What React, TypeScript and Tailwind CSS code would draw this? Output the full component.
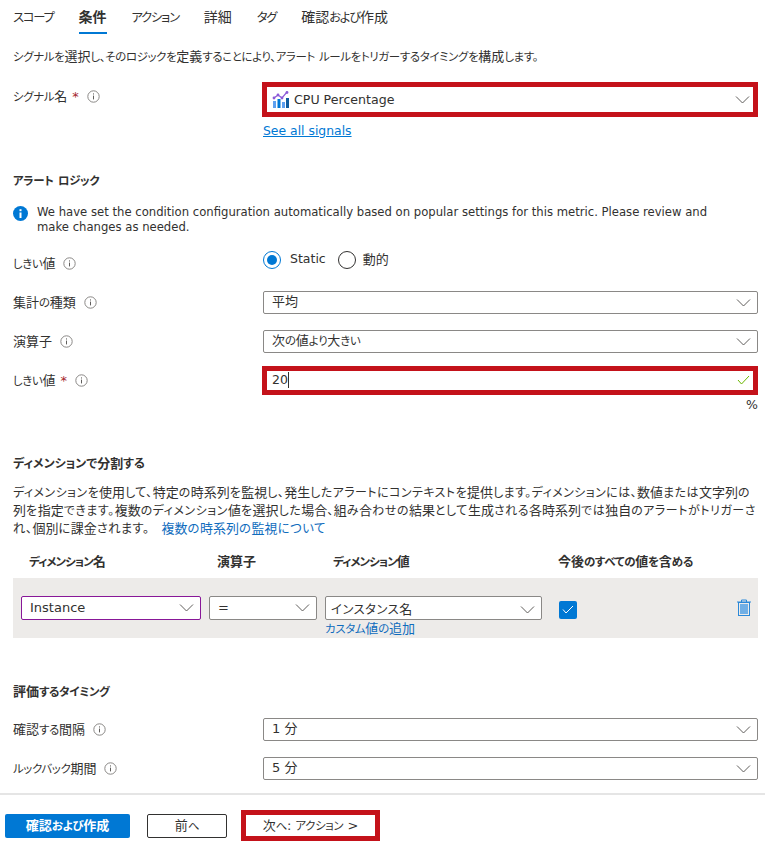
import { Fragment } from "react";

const FONT = "font-['DejaVu_Sans','Noto_Sans_CJK_JP',sans-serif] [font-feature-settings:'palt']";

// The reference font sets kana much narrower than its kanji, Noto does not
function Jp({ text, kana = "text-[0.88em] tracking-[-0.03em]" }: { text: string; kana?: string }) {
  return (
    <>
      {text.split(/([\u3040-\u30ff、。]+)/).map((part, i) =>
        i % 2 === 1 ? (
          <span key={i} className={kana}>{part}</span>
        ) : (
          <Fragment key={i}>{part}</Fragment>
        ),
      )}
    </>
  );
}

function InfoIcon() {
  return (
    <svg width="13" height="13" viewBox="0 0 13 13" className="shrink-0" fill="none">
      <circle cx="6.5" cy="6.5" r="5.7" stroke="#8a8886" />
      <path d="M6.5 5.6v3.8" stroke="#605e5c" />
      <path d="M6.5 3.4v1.1" stroke="#605e5c" />
    </svg>
  );
}

function Chevron() {
  return (
    <svg width="15" height="9" viewBox="0 0 15 9" fill="none" className="shrink-0">
      <path d="M1 1.5l6.5 6.5L14 1.5" stroke="#605e5c" />
    </svg>
  );
}

function Label({ text, required }: { text: string; required?: boolean }) {
  return (
    <div className="flex w-[250px] items-center gap-[8px] pt-[1px] text-[13px] text-[#323130]">
      <span>
        <Jp text={text} />
        {required && <span className="ml-[5px] text-[#a4262c]">*</span>}
      </span>
      <InfoIcon />
    </div>
  );
}

function Select({ text, kana, className }: { text: string; kana?: string; className?: string }) {
  return (
    <div
      className={`flex h-[23px] items-center justify-between rounded-[2px] border border-[#8a8886] bg-white pl-[8px] pr-[6px] text-[13px] text-[#323130] ${className ?? ""}`}
    >
      <span>
        <Jp text={text} kana={kana} />
      </span>
      <Chevron />
    </div>
  );
}

function FormRow({ label, required, select }: { label: string; required?: boolean; select: string }) {
  return (
    <div className="flex items-center pl-[13px] pr-[7px]">
      <Label text={label} required={required} />
      <Select text={select} className="flex-1" />
    </div>
  );
}

function SignalIcon() {
  return (
    <svg width="17" height="17" viewBox="0 0 17 17" className="shrink-0">
      <rect x="1" y="10" width="3" height="7" fill="#5ea0ef" />
      <rect x="5.500" y="8" width="3" height="9" fill="#0078d4" />
      <rect x="10" y="11" width="3" height="6" fill="#5ea0ef" />
      <rect x="14" y="7" width="3" height="10" fill="#0f5c9e" />
      <path d="M2 7l4-3 4 3 5-6" fill="none" stroke="#8c5ad8" strokeWidth="1.200" />
      <circle cx="2" cy="7" r="1.400" fill="#8c5ad8" />
      <circle cx="6" cy="4" r="1.400" fill="#8c5ad8" />
      <circle cx="10" cy="7" r="1.400" fill="#8c5ad8" />
      <circle cx="15" cy="1.500" r="1.400" fill="#8c5ad8" />
    </svg>
  );
}

const TABS = ["スコープ", "条件", "アクション", "詳細", "タグ", "確認および作成"];

export default function App() {
  return (
    <div className={`${FONT} h-[845px] w-[765px] overflow-hidden bg-white text-[13px] text-[#323130]`}>
      {/* Tabs */}
      <div className="flex h-[34px] gap-[25px] pl-[13px] text-[14px]">
        {TABS.map((tab) => (
          <div
            key={tab}
            className={`h-[34px] pt-[8px] leading-[18px] ${tab === "条件" ? "border-b-2 border-[#0078d4] font-semibold" : ""}`}
          >
            <Jp text={tab} kana="text-[0.88em] tracking-[-0.1em]" />
          </div>
        ))}
      </div>

      <p className="mt-[14px] pl-[13px] leading-[17px]">
        <Jp text="シグナルを選択し、そのロジックを定義することにより、アラート ルールをトリガーするタイミングを構成します。" />
      </p>

      {/* Signal name */}
      <div className="mt-[16px] flex items-start pl-[13px] pr-[7px]">
        <div className="pt-[4px]">
          <Label text="シグナル名" required />
        </div>
        <div className="-ml-px flex-1">
          <div className="flex h-[35px] items-center justify-between border-[5px] border-[#c4121a] pl-[5px] pr-[3px]">
            <div className="flex items-center gap-[5px]">
              <SignalIcon />
              <span className="pt-[2px] text-[12.600px]">CPU Percentage</span>
            </div>
            <Chevron />
          </div>
          <a className="mt-[6px] ml-px block text-[12.400px] leading-[15px] text-[#0078d4] underline">See all signals</a>
        </div>
      </div>

      {/* Alert logic */}
      <h2 className="mt-[34px] pl-[13px] font-bold leading-[17px]">
        <Jp text="アラート ロジック" />
      </h2>
      <div className="mt-[15px] flex gap-[9px] pl-[13px] pr-[40px] text-[11.650px] leading-[15px]">
        <svg width="15" height="15" viewBox="0 0 15 15" className="mt-[1px] shrink-0">
          <circle cx="7.500" cy="7.500" r="7.500" fill="#0078d4" />
          <rect x="6.500" y="6.500" width="2" height="5.500" fill="white" />
          <rect x="6.500" y="3.200" width="2" height="2" fill="white" />
        </svg>
        <p>We have set the condition configuration automatically based on popular settings for this metric. Please review and make changes as needed.</p>
      </div>

      <div className="mt-[15px] flex items-start pl-[13px] pr-[7px]">
        <div className="pt-[3px]">
          <Label text="しきい値" />
        </div>
        <div className="flex items-center text-[12.500px]">
          <span className="flex h-[18px] w-[18px] items-center justify-center rounded-full border border-[#0078d4]">
            <span className="h-[10px] w-[10px] rounded-full bg-[#0078d4]" />
          </span>
          <span className="ml-[9px]">Static</span>
          <span className="ml-[12px] h-[18px] w-[18px] rounded-full border border-[#323130]" />
          <span className="ml-[7px] text-[13px]">動的</span>
        </div>
      </div>

      <div className="mt-[17px] flex flex-col gap-[16px]">
        <FormRow label="集計の種類" select="平均" />
        <FormRow label="演算子" select="次の値より大きい" />
      </div>

      <div className="mt-[13px] flex items-center pl-[13px] pr-[7px]">
        <Label text="しきい値" required />
        <div className="-ml-px flex h-[29px] flex-1 items-center justify-between border-[5px] border-[#c4121a] pl-[5px] pr-[3px]">
          <span className="border-r border-[#323130] text-[12.500px] leading-[16px]">20</span>
          <svg width="13" height="10" viewBox="0 0 13 10" fill="none">
            <path d="M1 5l3.500 4L12 1" stroke="#6bb700" />
          </svg>
        </div>
      </div>
      <div className="mt-[2px] pr-[7px] text-right text-[12.500px] leading-[15px]">%</div>

      {/* Split by dimensions */}
      <h2 className="mt-[43px] pl-[13px] font-bold leading-[17px]">
        <Jp kana="text-[0.92em]" text="ディメンションで分割する" />
      </h2>
      <div className="mt-[11px] pl-[13px] leading-[18px] whitespace-nowrap">
        <p className="h-[18px]">
          <Jp kana="text-[0.92em] tracking-[0.04em]" text="ディメンションを使用して、特定の時系列を監視し、発生したアラートにコンテキストを提供します。ディメンションには、数値または文字列の" />
        </p>
        <p className="h-[18px]">
          <Jp kana="text-[0.92em] tracking-[0.048em]" text="列を指定できます。複数のディメンション値を選択した場合、組み合わせの結果として生成される各時系列では独自のアラートがトリガーさ" />
        </p>
        <p className="h-[18px]">
          <Jp kana="text-[0.95em] tracking-[0.03em]" text="れ、個別に課金されます。" />
          <span className="ml-[12px] text-[#0f6cbd]">
            <Jp kana="text-[0.95em] tracking-[0.05em]" text="複数の時系列の監視について" />
          </span>
        </p>
      </div>

      <div className="mt-[12px] flex h-[24px] items-center pl-[29px] font-semibold">
        <span className="w-[188px]"><Jp kana="text-[0.88em] tracking-[-0.08em]" text="ディメンション名" /></span>
        <span className="w-[116px]"><Jp text="演算子" /></span>
        <span className="w-[225px]"><Jp kana="text-[0.88em] tracking-[-0.08em]" text="ディメンション値" /></span>
        <span><Jp text="今後のすべての値を含める" /></span>
      </div>

      <div className="mx-[13px] mr-[7px] mt-[4px] flex h-[60px] items-start bg-[#edebe9] pl-[8px] pr-[7px] pt-[18px]">
        <Select text="Instance" className="h-[24px] w-[180px] border-[#881798]" />
        <Select text="=" className="ml-[8px] h-[24px] w-[108px]" />
        <div className="ml-[8px] w-[217px]">
          <Select text="インスタンス名" kana="text-[0.95em] tracking-[0.04em]" className="h-[24px] pl-[5px]! pt-[4px]" />
          <span className="block leading-[17px] text-[#0f6cbd]"><Jp text="カスタム値の追加" /></span>
        </div>
        <span className="ml-[17px] mt-[5px] flex h-[18px] w-[18px] items-center justify-center rounded-[2px] bg-[#0078d4]">
          <svg width="12" height="9" viewBox="0 0 12 9" fill="none">
            <path d="M1 4.500l3 3.500 7-7" stroke="white" />
          </svg>
        </span>
        <svg width="14" height="17" viewBox="0 0 14 17" className="ml-auto mt-[3px]">
          <path d="M0 3h14M4.500 3V1h5v2" fill="none" stroke="#2b88d8" />
          <rect x="1.500" y="3.500" width="11" height="13" fill="none" stroke="#2b88d8" />
          <rect x="3" y="5" width="8" height="10" fill="#71afe5" />
        </svg>
      </div>

      {/* Evaluation timing */}
      <h2 className="mt-[45px] pl-[13px] font-bold leading-[17px]">
        <Jp text="評価するタイミング" />
      </h2>
      <div className="mt-[17px] flex flex-col gap-[16px]">
        <FormRow label="確認する間隔" select="1 分" />
        <FormRow label="ルックバック期間" select="5 分" />
      </div>

      {/* Footer */}
      <div className="mt-[13px] flex h-[64px] items-center border-t-2 border-[#e5e5e5] pl-[5px]">
        <button className="h-[24px] w-[125px] rounded-[2px] bg-[#0078d4] font-semibold text-white"><Jp text="確認および作成" /></button>
        <button className="ml-[17px] h-[24px] w-[80px] rounded-[2px] border border-[#323130]"><Jp text="前へ" /></button>
        <button className="ml-[14px] h-[31px] w-[139px] border-[5px] border-[#c4121a]"><Jp text="次へ: アクション >" /></button>
      </div>
    </div>
  );
}
